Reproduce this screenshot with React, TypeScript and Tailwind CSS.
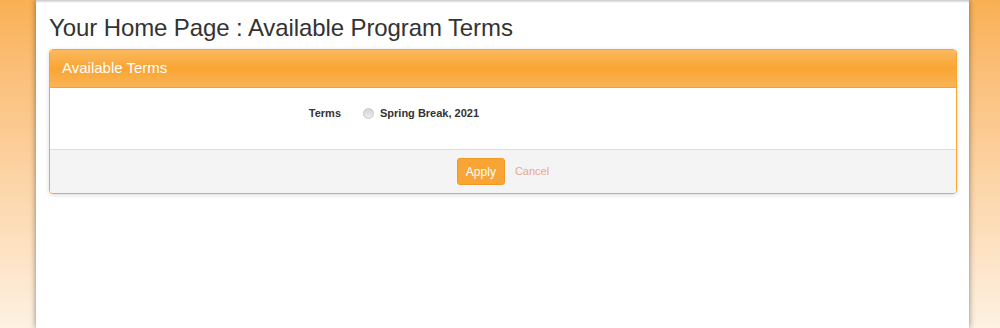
import React from 'react';

const App = () => {
  return (
    <div
      className="min-h-[328px] h-[328px] w-full bg-gradient-to-b from-[#f9b054] to-[#fdf1e2] overflow-hidden"
      style={{ fontFamily: '"Liberation Sans", Arial, sans-serif' }}
    >
      <div className="ml-[36px] w-[933px] h-full bg-white shadow-[0_0_6px_rgba(0,0,0,0.45)] relative">
        <div className="absolute top-0 left-0 right-0 h-[3px] bg-gradient-to-b from-[#c8c8c8] to-white" />
        <div className="pl-[13px] pr-[12px] pt-[13px]">
          <h1 className="text-[24px] leading-[30px] text-[#333] mb-[6px] tracking-[-0.1px]">
            Your Home Page : Available Program Terms
          </h1>

          <div className="border border-[#f9a534] rounded-[4px] shadow-[0_1px_4px_rgba(0,0,0,0.15)] overflow-hidden">
            <div className="h-[38px] bg-gradient-to-b from-[#fbb95c] via-[#f9a532] to-[#fbb454] border-b border-[#f6a233] px-[12px] flex items-center">
              <span className="text-white text-[15px]">Available Terms</span>
            </div>

            <div className="bg-white h-[61px] flex items-center pb-[10px]">
              <div className="w-[291px] text-right text-[11px] font-bold text-[#333]">Terms</div>
              <div className="ml-[22px] flex items-center gap-[6px]">
                <span className="w-[11px] h-[11px] rounded-full bg-gradient-to-b from-[#d6d6d6] to-[#ececec] border border-[#c8c8c8]" />
                <span className="text-[11px] font-bold text-[#333]">Spring Break, 2021</span>
              </div>
            </div>

            <div className="bg-[#f4f4f4] border-t border-[#dddddd] h-[44px] flex items-center justify-center gap-[10px]">
              <button className="w-[48px] h-[27px] bg-[#f9a535] border border-[#f39a26] rounded-[3px] text-white text-[12px]">
                Apply
              </button>
              <span className="text-[11px] text-[#eca68a]">Cancel</span>
            </div>
          </div>
        </div>
      </div>
    </div>
  );
};

export default App;
